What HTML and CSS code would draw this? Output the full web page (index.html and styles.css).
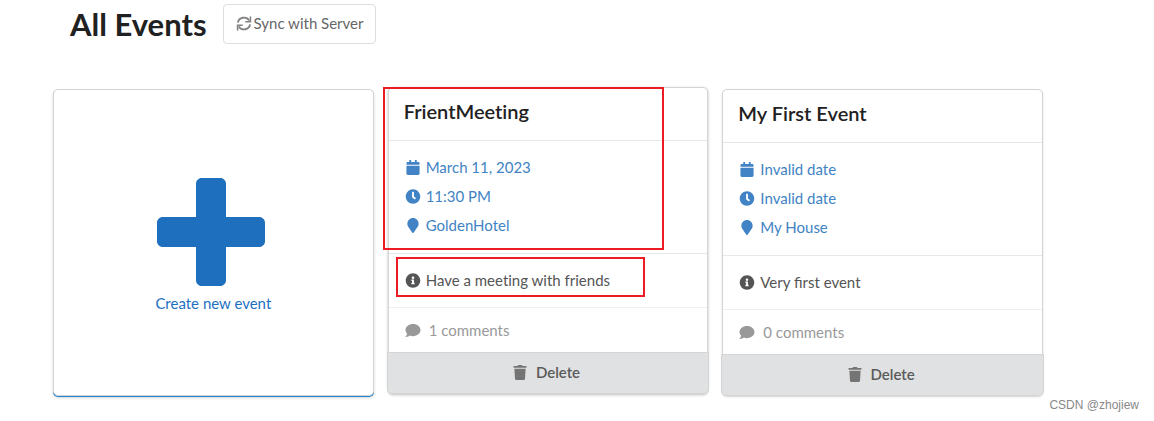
FILE: index.html
```html
<!DOCTYPE html>
<html lang="en">
<head>
  <meta charset="UTF-8">
  <meta name="viewport" content="width=device-width, initial-scale=1.0">
  <title>All Events</title>
  <link rel="stylesheet" href="styles.css">
</head>
<body>

  <!-- icon set -->
  <svg class="icon-defs" aria-hidden="true">
    <symbol id="sync" viewBox="0 0 16 16"><path d="M1.5 7A6.5 6.2 0 0 1 13.6 4.9M14.5 9A6.500 6.200 0 0 1 2.400 11.100" fill="none" stroke="currentColor" stroke-width="2"/><path d="M14 .6h1.700v6.400H9.300V5.300H14zM2 15.400H.3V9h6.400v1.700H2z"/></symbol>
    <symbol id="plus" viewBox="0 32 448 448"><path d="M448 294.2v-76.4c0-13.3-10.7-24-24-24H286.2V56c0-13.3-10.7-24-24-24h-76.4c-13.3 0-24 10.7-24 24v137.8H24c-13.3 0-24 10.7-24 24v76.4c0 13.3 10.7 24 24 24h137.8V456c0 13.3 10.7 24 24 24h76.4c13.3 0 24-10.7 24-24V318.2H424c13.3 0 24-10.7 24-24z"/></symbol>
    <symbol id="calendar" viewBox="0 0 448 512"><path d="M12 192h424c6.6 0 12 5.4 12 12v260c0 26.5-21.5 48-48 48H48c-26.5 0-48-21.5-48-48V204c0-6.6 5.4-12 12-12zm436-44v-36c0-26.5-21.5-48-48-48h-48V12c0-6.6-5.4-12-12-12h-40c-6.6 0-12 5.4-12 12v52H160V12c0-6.6-5.4-12-12-12h-40c-6.6 0-12 5.4-12 12v52H48C21.5 64 0 85.5 0 112v36c0 6.6 5.4 12 12 12h424c6.6 0 12-5.4 12-12z"/></symbol>
    <symbol id="clock" viewBox="0 0 512 512"><path d="M256 8C119 8 8 119 8 256s111 248 248 248 248-111 248-248S393 8 256 8zm92.49 313l-20 25a16 16 0 0 1-22.49 2.5l-67-49.72a40 40 0 0 1-15-31.23V112a16 16 0 0 1 16-16h32a16 16 0 0 1 16 16v144l58 42.5a16 16 0 0 1 2.49 22.5z"/></symbol>
    <symbol id="marker" viewBox="0 0 384 512"><path d="M172.268 501.67C26.97 291.031 0 269.413 0 192 0 85.961 85.961 0 192 0s192 85.961 192 192c0 77.413-26.97 99.031-172.268 309.67-9.535 13.774-29.93 13.773-39.464 0z"/></symbol>
    <symbol id="info" viewBox="0 0 512 512"><path d="M256 8C119.043 8 8 119.083 8 256c0 136.997 111.043 248 248 248s248-111.003 248-248C504 119.083 392.957 8 256 8zm0 110c23.196 0 42 18.804 42 42s-18.804 42-42 42-42-18.804-42-42 18.804-42 42-42zm56 254c0 6.627-5.373 12-12 12h-88c-6.627 0-12-5.373-12-12v-24c0-6.627 5.373-12 12-12h12v-64h-12c-6.627 0-12-5.373-12-12v-24c0-6.627 5.373-12 12-12h64c6.627 0 12 5.373 12 12v100h12c6.627 0 12 5.373 12 12v24z"/></symbol>
    <symbol id="comment" viewBox="0 0 512 512"><path d="M256 32C114.6 32 0 125.1 0 240c0 49.6 21.4 95 57 130.7C44.5 421.1 2.7 466 2.2 466.5c-2.2 2.3-2.8 5.7-1.5 8.7S4.8 480 8 480c66.3 0 116-31.8 140.6-51.4 32.7 12.3 69 19.4 107.4 19.4 141.4 0 256-93.1 256-208S397.4 32 256 32z"/></symbol>
    <symbol id="trash" viewBox="0 0 448 512"><path d="M432 32H312l-9.4-18.7A24 24 0 0 0 281.1 0H166.8a23.72 23.72 0 0 0-21.4 13.3L136 32H16A16 16 0 0 0 0 48v32a16 16 0 0 0 16 16h416a16 16 0 0 0 16-16V48a16 16 0 0 0-16-16zM53.2 467a48 48 0 0 0 47.9 45h245.8a48 48 0 0 0 47.9-45L416 128H32z"/></symbol>
  </svg>

  <header class="page-header">
    <h1>All Events</h1>
    <button type="button" class="sync-btn"><svg class="icon"><use href="#sync"/></svg>Sync with Server</button>
  </header>

  <main class="cards">
    <a class="card create-card" href="#">
      <svg class="plus-icon"><use href="#plus"/></svg>
      <span>Create new event</span>
    </a>

    <article class="card event-card raised">
      <h2 class="title">FrientMeeting</h2>
      <div class="details">
        <div class="row"><svg class="icon"><use href="#calendar"/></svg>March 11, 2023</div>
        <div class="row"><svg class="icon"><use href="#clock"/></svg>11:30 PM</div>
        <div class="row"><svg class="icon"><use href="#marker"/></svg>GoldenHotel</div>
      </div>
      <div class="description row"><svg class="icon"><use href="#info"/></svg>Have a meeting with friends</div>
      <div class="comments row"><svg class="icon"><use href="#comment"/></svg>1 comments</div>
      <button type="button" class="delete-btn"><svg class="icon"><use href="#trash"/></svg>Delete</button>
      <div class="mark mark-main"></div>
      <div class="mark mark-description"></div>
    </article>

    <article class="card event-card">
      <h2 class="title">My First Event</h2>
      <div class="details">
        <div class="row"><svg class="icon"><use href="#calendar"/></svg>Invalid date</div>
        <div class="row"><svg class="icon"><use href="#clock"/></svg>Invalid date</div>
        <div class="row"><svg class="icon"><use href="#marker"/></svg>My House</div>
      </div>
      <div class="description row"><svg class="icon"><use href="#info"/></svg>Very first event</div>
      <div class="comments row"><svg class="icon"><use href="#comment"/></svg>0 comments</div>
      <button type="button" class="delete-btn"><svg class="icon"><use href="#trash"/></svg>Delete</button>
    </article>
  </main>

  <div class="watermark">CSDN @zhojiew</div>

</body>
</html>
```

FILE: styles.css
```css
* {
  box-sizing: border-box;
}
body {
  margin: 0;
  padding: 4px 111px 24px 53px;
  background: #fff;
  color: #212121;
  font-family: Lato, "Liberation Sans", sans-serif;
  font-size: 15px;
  line-height: 24px;
}
h1, h2 {
  margin: 0;
}
.icon-defs {
  display: none;
}
.icon {
  width: 16px;
  height: 15px;
  flex: none;
  fill: currentColor;
}

.page-header {
  display: flex;
  align-items: center;
  gap: 16px;
  padding-left: 17px;
  margin-bottom: 45px;
}
h1 {
  font-size: 31px;
  line-height: 40px;
  font-weight: bold;
}
button {
  font-family: inherit;
  font-size: 15px;
  cursor: pointer;
}
.sync-btn {
  display: flex;
  align-items: center;
  gap: 2px;
  height: 40px;
  padding: 0 12px 2px;
  background: #fff;
  border: 1px solid #dededf;
  border-radius: 4px;
  color: #666;
}
.sync-btn .icon {
  opacity: .8;
}

.cards {
  display: grid;
  grid-template-columns: repeat(3, 1fr);
  gap: 14px;
}
.card {
  background: #fff;
  border: 1px solid #d4d4d5;
  border-radius: 5px;
  box-shadow: 0 1px 2px #d4d4d5;
}
.create-card {
  display: flex;
  flex-direction: column;
  align-items: center;
  justify-content: center;
  gap: 5px;
  padding-top: 8px;
  box-shadow: 0 1px 0 #2185d0, 0 2px 3px #d4d4d5;
  color: #1e70bf;
  text-decoration: none;
}
.plus-icon {
  width: 108px;
  height: 108px;
  margin-right: 4px;
  fill: currentColor;
}

.event-card {
  position: relative;
  display: flex;
  flex-direction: column;
}
.raised {
  transform: translateY(-2px);
  box-shadow: 0 1px 3px #bcbdbd;
  font-variant-ligatures: none;
}
.title {
  padding: 11px 15px 17px;
  font-size: 20px;
  line-height: 24px;
  font-weight: 600;
}
.row {
  display: flex;
  align-items: center;
  gap: 5px;
}
.details {
  display: flex;
  flex-direction: column;
  gap: 5px;
  padding: 14px 16px 16px;
  border-top: 1px solid #e8e8e8;
  color: #4183c4;
}
.description {
  padding: 14px 16px 15px;
  border-top: 1px solid #e8e8e8;
  color: #555;
}
.comments {
  gap: 8px;
  padding: 10px 16px;
  border-top: 1px solid #f0f0f0;
  color: #999;
}
.delete-btn {
  display: flex;
  align-items: center;
  justify-content: center;
  gap: 8px;
  height: 42px;
  margin: 0 -2px -1px;
  padding: 0 8px 2px 4px;
  background: #e0e1e2;
  border: 1px solid #d4d4d5;
  border-radius: 0 0 5px 5px;
  color: #5a5a5a;
  font-weight: 600;
}
.delete-btn .icon {
  opacity: .8;
}

/* red frames drawn over the first event */
.mark {
  position: absolute;
  border: 2px solid #ed1c24;
}
.mark-main {
  top: -1px;
  left: -6px;
  width: 281px;
  height: 163px;
}
.mark-description {
  top: 169px;
  left: 7px;
  width: 249px;
  height: 40px;
}

.watermark {
  position: absolute;
  right: 15px;
  bottom: 8px;
  color: #888;
  font-family: "Liberation Sans", Arial, sans-serif;
  font-size: 12px;
  line-height: 16px;
}
```
